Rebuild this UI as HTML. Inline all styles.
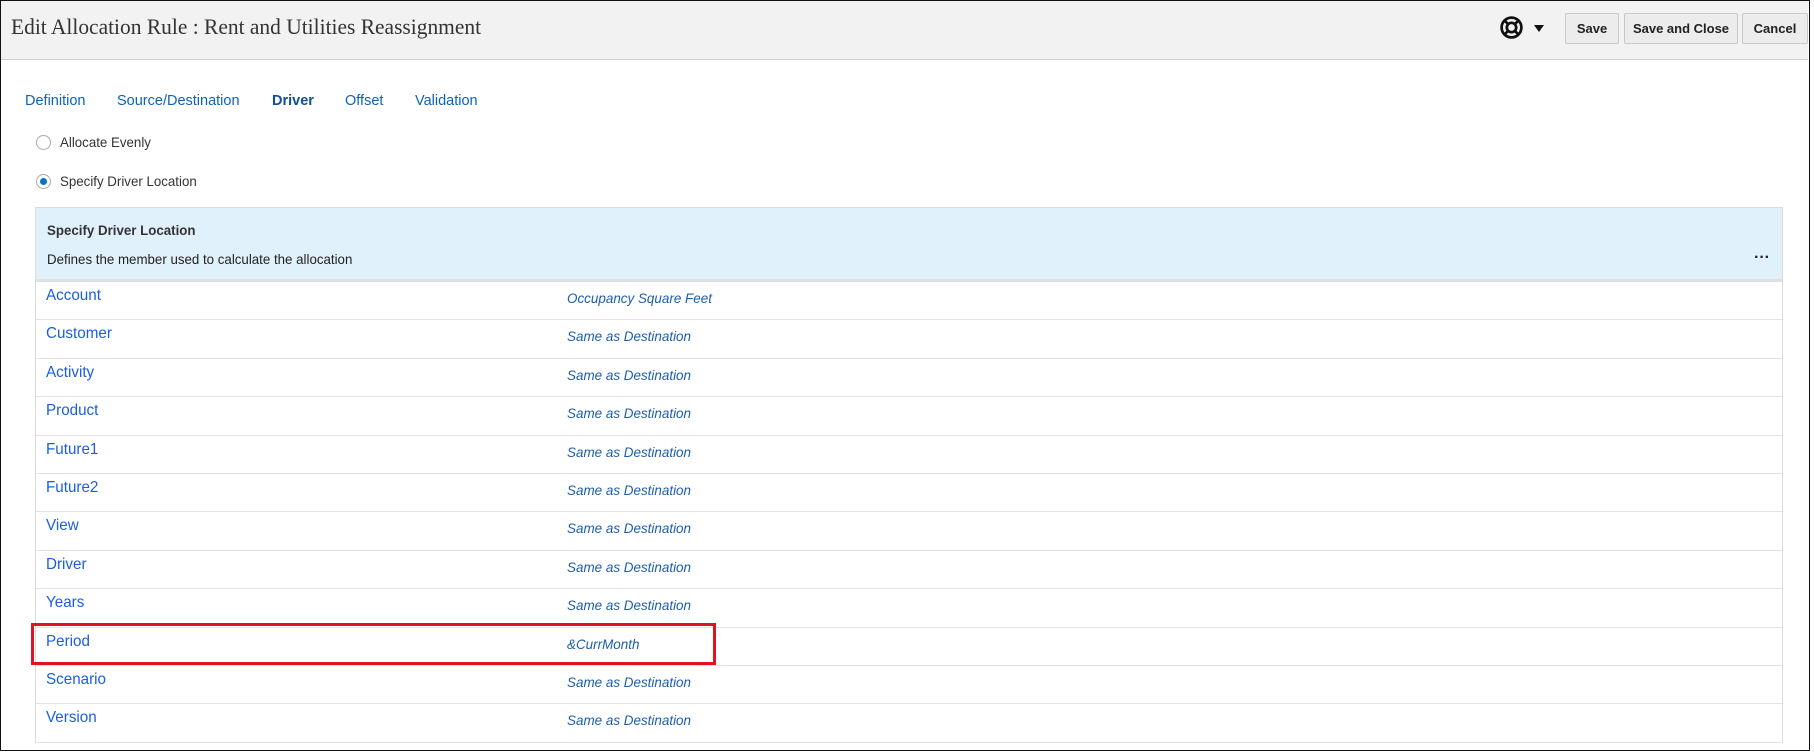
<!DOCTYPE html>
<html><head><meta charset="utf-8"><style>
*{box-sizing:border-box;margin:0;padding:0}
body{width:1814px;height:752px;background:#fff;position:relative;overflow:hidden;font-family:"Liberation Sans",sans-serif}
.frame{position:absolute;left:0;top:0;width:1810px;height:751px;border:1.5px solid #111}
.hdr{position:absolute;left:1px;top:1px;width:1807px;height:59px;background:#f2f2f2;border-bottom:1px solid #cfcfcf}
.title{position:absolute;left:10px;top:13px;font-family:"Liberation Serif",serif;font-size:22px;color:#333;transform:scaleX(.975);transform-origin:left}
.btn{position:absolute;top:12px;height:31px;background:#ececec;border:1px solid #c9c9c9;border-radius:2px;font-size:13px;font-weight:bold;color:#222;display:flex;align-items:center;justify-content:center}
.tabs span{position:absolute;top:93px;font-size:14.5px;color:#0b64b8}
.radio{position:absolute;left:36px;width:15px;height:15px;border-radius:50%;border:1px solid #aaa;background:#fff}
.rl{position:absolute;left:60px;font-size:14px;color:#333;transform:scaleX(.95);transform-origin:left}
.panel{position:absolute;left:35px;top:207px;width:1748px;height:536px;border:1px solid #dcdcdc}
.ph{position:absolute;left:0;top:0;width:100%;height:74px;background:#e1f1fc;border-bottom:3px solid #e0e0e0}
.row{position:absolute;left:0;width:100%;height:38.4px;border-bottom:1px solid #e3e3e3}
.row .k{position:absolute;left:10px;top:5px;font-size:16px;color:#1a5ee0;transform:scaleX(.95);transform-origin:left}
.row .v{position:absolute;left:531px;top:8px;font-size:14px;font-style:italic;color:#1d5ea8;transform:scaleX(.96);transform-origin:left}
</style></head><body>
<div class="hdr">
<div class="title">Edit Allocation Rule : Rent and Utilities Reassignment</div>
<svg style="position:absolute;left:1498px;top:14px" width="25" height="25" viewBox="0 0 24 24" fill="none" stroke="#111" stroke-width="2.6"><circle cx="12" cy="12" r="9.5"/><circle cx="12" cy="12" r="4.5"/><path d="M5.5 5.5l3.3 3.3M18.5 5.5l-3.3 3.3M5.5 18.5l3.3-3.3M18.5 18.5l-3.3-3.3"/></svg>
<svg style="position:absolute;left:1533px;top:24px" width="10" height="7"><path d="M0 0h10L5 7z" fill="#111"/></svg>
<div class="btn" style="left:1564px;width:54px">Save</div>
<div class="btn" style="left:1623px;width:114px">Save and Close</div>
<div class="btn" style="left:1741px;width:66px">Cancel</div>
</div>
<div class="tabs">
<span style="left:25px">Definition</span>
<span style="left:117px">Source/Destination</span>
<span style="left:272px;font-weight:bold;color:#0f4f96">Driver</span>
<span style="left:345px">Offset</span>
<span style="left:415px">Validation</span>
</div>
<div class="radio" style="top:135px"></div><div class="rl" style="top:134px">Allocate Evenly</div>
<div class="radio" style="top:174px"><div style="position:absolute;left:3px;top:3px;width:7px;height:7px;border-radius:50%;background:#0572ce"></div></div><div class="rl" style="top:173px">Specify Driver Location</div>
<div class="panel">
<div class="ph">
<div style="position:absolute;left:11px;top:14px;font-size:14px;font-weight:bold;color:#333;transform:scaleX(.95);transform-origin:left">Specify Driver Location</div>
<div style="position:absolute;left:11px;top:43px;font-size:14px;color:#222;transform:scaleX(.95);transform-origin:left">Defines the member used to calculate the allocation</div>
<div style="position:absolute;left:1718px;top:41px;font-size:16px;font-weight:bold;color:#222">···</div>
</div>
<div class="row" style="top:74px"><span class="k">Account</span><span class="v">Occupancy Square Feet</span></div>
<div class="row" style="top:112.4px"><span class="k">Customer</span><span class="v">Same as Destination</span></div>
<div class="row" style="top:150.8px"><span class="k">Activity</span><span class="v">Same as Destination</span></div>
<div class="row" style="top:189.2px"><span class="k">Product</span><span class="v">Same as Destination</span></div>
<div class="row" style="top:227.6px"><span class="k">Future1</span><span class="v">Same as Destination</span></div>
<div class="row" style="top:266px"><span class="k">Future2</span><span class="v">Same as Destination</span></div>
<div class="row" style="top:304.4px"><span class="k">View</span><span class="v">Same as Destination</span></div>
<div class="row" style="top:342.8px"><span class="k">Driver</span><span class="v">Same as Destination</span></div>
<div class="row" style="top:381.2px"><span class="k">Years</span><span class="v">Same as Destination</span></div>
<div class="row" style="top:419.6px"><span class="k">Period</span><span class="v">&amp;CurrMonth</span></div>
<div class="row" style="top:458px"><span class="k">Scenario</span><span class="v">Same as Destination</span></div>
<div class="row" style="top:496.4px"><span class="k">Version</span><span class="v">Same as Destination</span></div>
</div>
<div style="position:absolute;left:31px;top:623px;width:685px;height:42px;border:3px solid #e0141e"></div>
<div class="frame"></div>
</body></html>
